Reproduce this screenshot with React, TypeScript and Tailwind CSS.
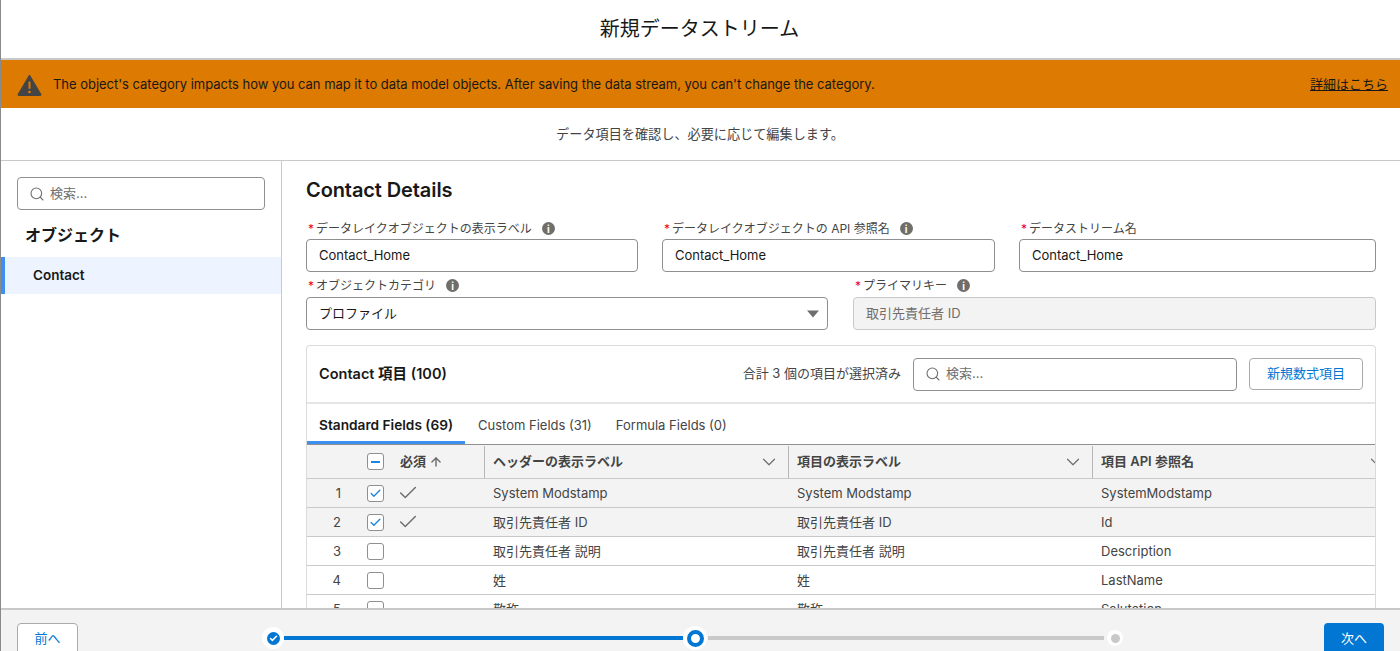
import { Check, ChevronDown, ArrowUp, Search } from 'lucide-react'

const rows = [
  { n: 1, sel: true, label: 'System Modstamp', api: 'SystemModstamp' },
  { n: 2, sel: true, label: '取引先責任者 ID', api: 'Id' },
  { n: 3, sel: false, label: '取引先責任者 説明', api: 'Description' },
  { n: 4, sel: false, label: '姓', api: 'LastName' },
  { n: 5, sel: false, label: '敬称', api: 'Salutation' },
]

function Info() {
  return (
    <span className="ml-[10px] flex h-[13px] w-[13px] items-center justify-center rounded-full bg-[#706e6b] text-[10px] font-bold leading-none text-white">
      i
    </span>
  )
}

function Label({ text, info = true }: { text: string; info?: boolean }) {
  return (
    <div className="flex h-[21px] items-center pl-[2px] text-xs text-[#444444]">
      <span className="mr-[2px] text-[#ea001e]">*</span>
      <span>{text}</span>
      {info && <Info />}
    </div>
  )
}

function TextField({ label, info }: { label: string; info?: boolean }) {
  return (
    <div className="flex-1">
      <Label text={label} info={info} />
      <div className="flex h-[33px] items-center rounded border border-[#8f8f8f] bg-white px-3 pt-[1px] text-[13px] text-[#181818]">
        Contact_Home
      </div>
    </div>
  )
}

function SearchBox({ className }: { className: string }) {
  return (
    <div className={`flex items-center rounded border border-[#8f8f8f] bg-white pl-[11px] text-[13px] text-[#706e6b] ${className}`}>
      <Search size={16} strokeWidth={1.6} className="mr-[5px] text-[#706e6b]" />
      検索...
    </div>
  )
}

function Checkbox({ checked, mixed }: { checked?: boolean; mixed?: boolean }) {
  return (
    <span className="flex h-[17px] w-[17px] items-center justify-center rounded-[3px] border border-[#8f8f8f] bg-white">
      {checked && <Check size={13} strokeWidth={2.5} className="text-[#1b86e0]" />}
      {mixed && <span className="h-[2px] w-[9px] bg-[#1b86e0]" />}
    </span>
  )
}

function HeaderCell({ text }: { text: string }) {
  return (
    <div className="flex h-[32px] items-center justify-between border-l border-[#b5b5b5] pl-2 pr-[8px] text-[13px] font-semibold text-[#444444]">
      {text}
      <ChevronDown size={22} strokeWidth={1.3} className="text-[#706e6b]" />
    </div>
  )
}

export default function App() {
  return (
    <div className="flex h-[651px] flex-col overflow-hidden border-l border-[#8a8a8a] bg-white font-['Inter','Noto_Sans_CJK_JP',sans-serif] text-[#181818]">
      <header className="flex h-[60px] shrink-0 items-center justify-center border-b-2 border-[#c9c9c9] pr-[2px] text-xl">
        新規データストリーム
      </header>

      <div className="flex h-[48px] shrink-0 items-center bg-[#dd7a01] pl-4 pr-3 pt-[1px] text-[13px]">
        <svg width="25" height="22" viewBox="0 0 25 22" className="mr-[11px]">
          <path d="M12.5 1 L24 20.5 Q24.3 21.5 23 21.5 L2 21.5 Q0.7 21.5 1 20.5 Z" fill="#444444" stroke="#444444" strokeLinejoin="round" />
          <rect x="11.5" y="7.5" width="2" height="7.5" rx="1" fill="#dd7a01" />
          <circle cx="12.5" cy="18" r="1.3" fill="#dd7a01" />
        </svg>
        <span className="flex-1 tracking-[-0.025px]">
          The object's category impacts how you can map it to data model objects. After saving the data stream, you can't change the category.
        </span>
        <a className="underline">詳細はこちら</a>
      </div>

      <div className="flex h-[53px] shrink-0 items-center justify-center border-b border-[#c9c9c9] pr-[1px] pt-[1px] text-[13.15px] text-[#444444]">
        データ項目を確認し、必要に応じて編集します。
      </div>

      <div className="flex min-h-0 flex-1">
        <aside className="w-[281px] shrink-0 border-r border-[#c9c9c9] pt-4">
          <SearchBox className="mx-4 h-[33px]" />
          <h2 className="mb-[11px] ml-6 mt-[15px] text-base font-bold leading-[21px]">オブジェクト</h2>
          <div className="flex h-[37px] items-center border-l-[4px] border-[#3d8ff0] bg-[#eef4ff] pl-7 text-[13.5px] font-semibold">
            Contact
          </div>
        </aside>

        <main className="min-w-0 flex-1 overflow-hidden pl-6 pr-6">
          <h1 className="mt-[17px] text-xl font-semibold leading-6 tracking-[-0.1px]">Contact Details</h1>
          <div className="mt-[16px] flex gap-6">
            <div className="w-[332px] flex-none"><TextField label="データレイクオブジェクトの表示ラベル" /></div>
            <div className="w-[333px] flex-none"><TextField label="データレイクオブジェクトの API 参照名" /></div>
            <TextField label="データストリーム名" info={false} />
          </div>
          <div className="mt-[3px] flex gap-[25px]">
            <div className="w-[522px] flex-none">
              <div className="mb-[1px]"><Label text="オブジェクトカテゴリ" /></div>
              <div className="flex h-[33px] items-center justify-between rounded border border-[#8f8f8f] bg-white pl-3 pr-[8px] text-[13px]">
                プロファイル
                <svg width="12" height="8" viewBox="0 0 12 8"><path d="M0 0.5 H12 L6 7.5 Z" fill="#706e6b" /></svg>
              </div>
            </div>
            <div className="flex-1">
              <div className="mb-[1px]"><Label text="プライマリキー" /></div>
              <div className="flex h-[33px] items-center rounded border border-[#c9c9c9] bg-[#f3f3f3] px-3 text-[13px] text-[#706e6b]">
                取引先責任者 ID
              </div>
            </div>
          </div>

          <section className="mt-[15px] rounded-t border border-b-0 border-[#dddbda]">
            <div className="flex h-[58px] items-center border-b-2 border-[#e5e5e5] pl-3 pr-3">
              <span className="flex-1 text-[14.5px] font-semibold">Contact 項目 (100)</span>
              <span className="mr-3 text-[13px] text-[#444444]">合計 3 個の項目が選択済み</span>
              <SearchBox className="mr-3 h-[33px] w-[324px]" />
              <button className="h-[32px] w-[114px] rounded border border-[#aaaaaa] bg-white text-[13px] text-[#0176d3]">
                新規数式項目
              </button>
            </div>

            <div className="flex h-[40px] text-[13px]">
              <div className="flex w-[158px] items-center border-b-[3px] border-[#3d8ff0] pl-3 pt-[5px] text-[13.7px] font-semibold">
                Standard Fields (69)
              </div>
              <div className="ml-px flex items-center px-3 pt-[3px] text-[#444444]">Custom Fields (31)</div>
              <div className="flex items-center px-3 pt-[3px] text-[#444444]">Formula Fields (0)</div>
            </div>

            <div className="overflow-hidden border-t border-[#8f8f8f]">
              <div className="grid h-[34px] grid-cols-[60px_33px_84px_304px_304px_304px] items-center border-b border-[#c9c9c9] bg-[#f3f3f3]">
                <div />
                <Checkbox mixed />
                <div className="flex items-center text-[13px] font-semibold text-[#444444]">
                  必須
                  <ArrowUp size={14} strokeWidth={2.5} className="ml-[3px] text-[#706e6b]" />
                </div>
                <HeaderCell text="ヘッダーの表示ラベル" />
                <HeaderCell text="項目の表示ラベル" />
                <HeaderCell text="項目 API 参照名" />
              </div>
              {rows.map((r) => (
                <div
                  key={r.n}
                  className={`grid h-[29px] grid-cols-[60px_33px_84px_304px_304px_304px] items-center border-b border-[#c9c9c9] text-[13px] text-[#444444] ${r.sel ? 'bg-[#f3f3f3]' : 'bg-white'}`}
                >
                  <div className="pr-[26px] pt-[1px] text-right">{r.n}</div>
                  <Checkbox checked={r.sel} />
                  <div>{r.sel && <Check size={22} strokeWidth={1.6} className="-ml-[3px] text-[#706e6b]" />}</div>
                  <div className="pl-[9px] pt-[1px]">{r.label}</div>
                  <div className="pl-[9px] pt-[1px]">{r.label}</div>
                  <div className="pl-[9px] pt-[1px]">{r.api}</div>
                </div>
              ))}
            </div>
          </section>
        </main>
      </div>

      <footer className="flex h-[43px] shrink-0 overflow-hidden border-t-2 border-[#c9c9c9] bg-[#f3f3f3] pl-4 pt-[13px]">
        <button className="h-[32px] w-[61px] shrink-0 rounded border border-[#aaaaaa] bg-white text-[13px] text-[#0176d3]">前へ</button>

        <div className="ml-[184px] flex h-[30px] w-[861px] shrink-0 items-center">
          <span className="flex h-[22px] w-[22px] shrink-0 items-center justify-center rounded-full bg-white">
            <span className="flex h-[13px] w-[13px] items-center justify-center rounded-full bg-[#0176d3]">
              <Check size={9} strokeWidth={4} className="text-white" />
            </span>
          </span>
          <span className="h-[4px] flex-[399] bg-[#0176d3]" />
          <span className="flex h-[24px] w-[24px] shrink-0 items-center justify-center rounded-full bg-white">
            <span className="h-[17px] w-[17px] rounded-full border-[4px] border-[#0176d3] bg-white" />
          </span>
          <span className="ml-[1px] mr-[3px] h-[4px] flex-[396] bg-[#c9c9c9]" />
          <span className="flex h-[16px] w-[16px] shrink-0 items-center justify-center rounded-full bg-white">
            <span className="h-[9px] w-[9px] rounded-full bg-[#c9c9c9]" />
          </span>
        </div>

        <button className="ml-[201px] h-[32px] w-[60px] shrink-0 rounded bg-[#0176d3] text-[13px] text-white">次へ</button>
      </footer>
    </div>
  )
}
